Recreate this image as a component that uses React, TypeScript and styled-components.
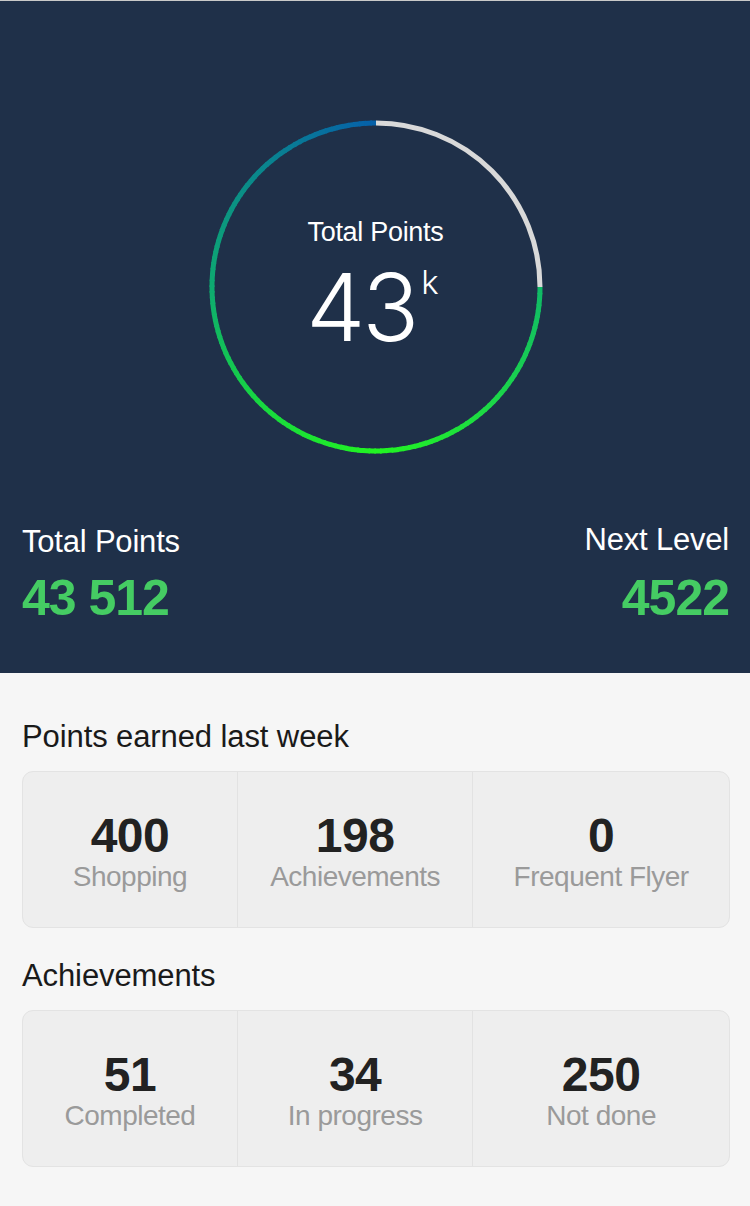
import React from "react";
import styled, { createGlobalStyle } from "styled-components";

const GlobalStyle = createGlobalStyle`
  html, body { margin: 0; padding: 0; background: #f6f6f6; }
  body { font-family: "Helvetica Neue", "Liberation Sans", Arial, sans-serif; -webkit-font-smoothing: antialiased; }
  * { box-sizing: border-box; }
`;

const Page = styled.div`
  width: 750px;
  min-height: 1206px;
  display: flex;
  flex-direction: column;
  background: #f6f6f6;
`;

const Header = styled.header`
  height: 673px;
  background: #1f3049;
  border-top: 1px solid #c9c9c9;
  display: flex;
  flex-direction: column;
  padding: 0 21px 0 22px;
`;

const RingArea = styled.div`
  padding-top: 119px;
  display: flex;
  justify-content: center;
`;

const Ring = styled.div`
  position: relative;
  width: 334px;
  height: 334px;
`;

const RingSvg = styled.svg`
  position: absolute;
  inset: 0;
`;

const RingLabel = styled.div`
  position: absolute;
  inset: 0;
  display: flex;
  flex-direction: column;
  align-items: center;
  padding-top: 96px;
  color: #ffffff;
`;

const RingTitle = styled.div`
  font-size: 27px;
  line-height: 32px;
  letter-spacing: -0.3px;
`;

const BigValue = styled.div`
  display: flex;
  align-items: flex-start;
  margin-top: 12px;
  margin-left: -6px;
`;

const BigNumber = styled.span`
  font-family: "Inter", "Liberation Sans", sans-serif;
  font-weight: 300;
  font-size: 94px;
  line-height: 94px;
  letter-spacing: -3px;
`;

const Suffix = styled.span`
  font-family: "Inter", "Liberation Sans", sans-serif;
  font-weight: 300;
  font-size: 33px;
  line-height: 33px;
  margin-left: 5px;
  margin-top: 6px;
`;

const Totals = styled.div`
  display: flex;
  justify-content: space-between;
  margin-top: 70px;
`;

const TotalCol = styled.div<{ $align: "left" | "right"; $shift: number }>`
  display: flex;
  flex-direction: column;
  align-items: ${(p) => (p.$align === "left" ? "flex-start" : "flex-end")};
  margin-top: ${(p) => p.$shift}px;
`;

const TotalLabel = styled.div`
  color: #ffffff;
  font-size: 31px;
  line-height: 36px;
  letter-spacing: -0.2px;
`;

const TotalValue = styled.div<{ $drop: number }>`
  color: #45cc63;
  font-weight: 700;
  font-size: 50px;
  line-height: 50px;
  letter-spacing: -1px;
  margin-top: ${(p) => 13 + p.$drop}px;
`;

const Body = styled.main`
  padding: 46px 20px 0 22px;
  display: flex;
  flex-direction: column;
`;

const SectionTitle = styled.h2`
  margin: 0 0 16px;
  font-weight: 400;
  font-size: 31px;
  line-height: 36px;
  letter-spacing: -0.1px;
  color: #1a1a1a;
`;

const Card = styled.div`
  display: grid;
  grid-template-columns: 1fr 1.1fr 1.2fr;
  height: 157px;
  background: #eeeeee;
  border: 1.5px solid #e3e3e3;
  border-radius: 11px;
  margin-bottom: 30px;
  overflow: hidden;
`;

const Cell = styled.div`
  display: flex;
  flex-direction: column;
  align-items: center;
  justify-content: center;
  padding-top: 7px;
  & + & {
    border-left: 1.5px solid #e2e2e2;
  }
`;

const CellValue = styled.div`
  font-weight: 700;
  font-size: 48px;
  line-height: 48px;
  letter-spacing: -0.5px;
  color: #222222;
`;

const CellLabel = styled.div`
  font-size: 28px;
  line-height: 34px;
  letter-spacing: -0.5px;
  color: #9a9a9a;
`;

type Stat = { value: string; label: string };

const weekly: Stat[] = [
  { value: "400", label: "Shopping" },
  { value: "198", label: "Achievements" },
  { value: "0", label: "Frequent Flyer" },
];

const achievements: Stat[] = [
  { value: "51", label: "Completed" },
  { value: "34", label: "In progress" },
  { value: "250", label: "Not done" },
];

const stops: [number, [number, number, number]][] = [
  [0, [16, 185, 103]],
  [45, [28, 215, 72]],
  [90, [34, 244, 34]],
  [135, [24, 215, 64]],
  [180, [14, 170, 112]],
  [225, [10, 135, 140]],
  [270, [6, 96, 170]],
];

function colorAt(a: number): string {
  for (let i = 0; i < stops.length - 1; i++) {
    const [a0, c0] = stops[i];
    const [a1, c1] = stops[i + 1];
    if (a >= a0 && a <= a1) {
      const t = (a - a0) / (a1 - a0);
      const c = c0.map((v, k) => Math.round(v + (c1[k] - v) * t));
      return `rgb(${c[0]},${c[1]},${c[2]})`;
    }
  }
  const c = stops[stops.length - 1][1];
  return `rgb(${c[0]},${c[1]},${c[2]})`;
}

function arcPath(cx: number, cy: number, r: number, a0: number, a1: number) {
  const rad = (d: number) => (d * Math.PI) / 180;
  const x0 = cx + r * Math.cos(rad(a0));
  const y0 = cy + r * Math.sin(rad(a0));
  const x1 = cx + r * Math.cos(rad(a1));
  const y1 = cy + r * Math.sin(rad(a1));
  const large = a1 - a0 > 180 ? 1 : 0;
  return `M ${x0} ${y0} A ${r} ${r} 0 ${large} 1 ${x1} ${y1}`;
}

const ProgressRing: React.FC = () => {
  const cx = 167;
  const cy = 167;
  const r = 164;
  const segs = [];
  const n = 135;
  for (let i = 0; i < n; i++) {
    const a0 = (i * 270) / n;
    const a1 = ((i + 1) * 270) / n + (i < n - 1 ? 0.6 : 0);
    segs.push(
      <path
        key={i}
        d={arcPath(cx, cy, r, a0, a1)}
        stroke={colorAt((a0 + a1) / 2)}
        strokeWidth={5}
        fill="none"
      />
    );
  }
  return (
    <RingSvg width={334} height={334} viewBox="0 0 334 334">
      <path d={arcPath(cx, cy, r, 270, 360)} stroke="#d9d9d9" strokeWidth={5} fill="none" />
      {segs}
    </RingSvg>
  );
};

const StatCard: React.FC<{ items: Stat[] }> = ({ items }) => (
  <Card>
    {items.map((s) => (
      <Cell key={s.label}>
        <CellValue>{s.value}</CellValue>
        <CellLabel>{s.label}</CellLabel>
      </Cell>
    ))}
  </Card>
);

export default function App() {
  return (
    <Page>
      <GlobalStyle />
      <Header>
        <RingArea>
          <Ring>
            <ProgressRing />
            <RingLabel>
              <RingTitle>Total Points</RingTitle>
              <BigValue>
                <BigNumber>43</BigNumber>
                <Suffix>k</Suffix>
              </BigValue>
            </RingLabel>
          </Ring>
        </RingArea>
        <Totals>
          <TotalCol $align="left" $shift={0}>
            <TotalLabel>Total Points</TotalLabel>
            <TotalValue $drop={0}>43 512</TotalValue>
          </TotalCol>
          <TotalCol $align="right" $shift={-2}>
            <TotalLabel>Next Level</TotalLabel>
            <TotalValue $drop={2}>4522</TotalValue>
          </TotalCol>
        </Totals>
      </Header>
      <Body>
        <SectionTitle>Points earned last week</SectionTitle>
        <StatCard items={weekly} />
        <SectionTitle>Achievements</SectionTitle>
        <StatCard items={achievements} />
      </Body>
    </Page>
  );
}
